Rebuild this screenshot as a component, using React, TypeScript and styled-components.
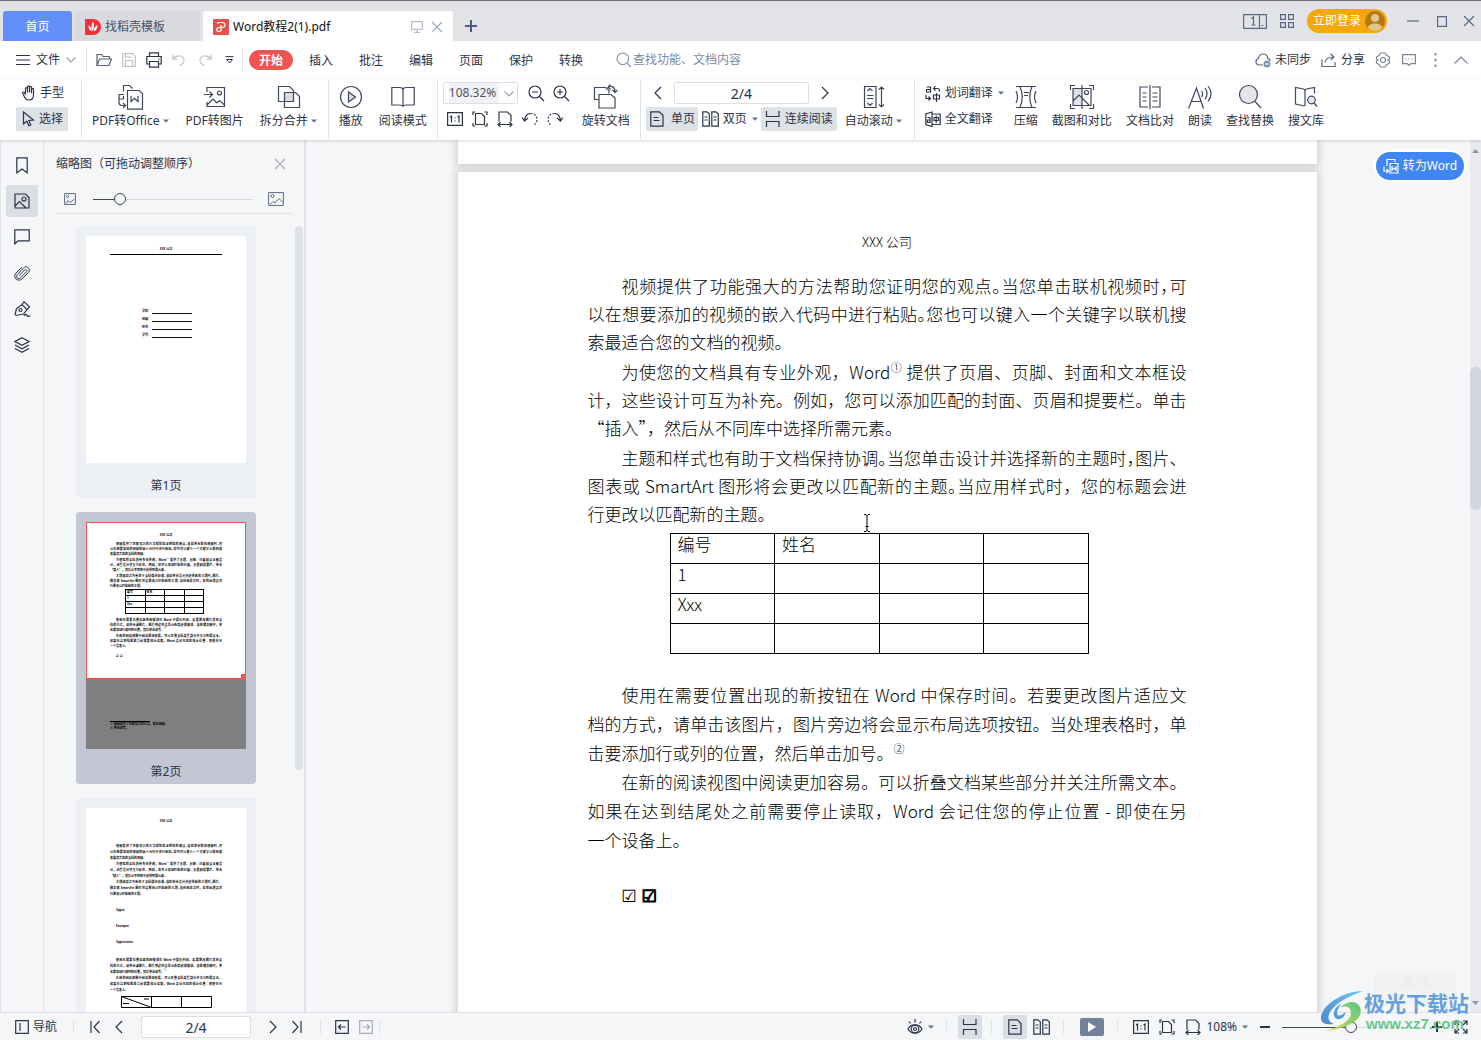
import React from 'react';
import styled, { createGlobalStyle, css } from 'styled-components';

const ink = '#2b3347';
const slate = '#5a6785';
const ui = `"Noto Sans", "Noto Sans CJK SC", sans-serif`;

const Global = createGlobalStyle`
  * { box-sizing: border-box; }
  html, body { margin: 0; height: 100%; }
  body { font: 12px/16px ${ui}; color: ${ink}; background: #f5f6f8; overflow: hidden; }
  button, input, select { font: inherit; color: inherit; margin: 0; }
  button { border: 0; background: none; padding: 0; cursor: pointer; }
`;

/* ---------- icons ---------- */

const Svg = styled.svg`
  display: block;
  flex: none;
  fill: none;
  stroke: currentColor;
  stroke-width: 1.2;
`;

const art: Record<string, [number, number, React.ReactNode]> = {
  menu: [14, 12, <path d="M0 1.500h14M0 6h14M0 10.500h14" />],
  chevron: [10, 6, <path d="M.5.5 5 5l4.500-4.500" />],
  caret: [8, 4, <path d="M1 .5h6L4 3.800z" fill="#66728c" stroke="none" />],
  folder: [16, 14, <path d="M1 12.500V1.500h4.500l1.500 2h6.500v2.500M1 12.500 3.500 6H15.500l-2.500 6.500z" />],
  save: [14, 14, <path d="M.6.6h10l2.800 2.800v10H.6zM3.500 13V7.500h7V13M3.500.6v3.500h6" />],
  printer: [16, 16, <path d="M3.500 4.500V.8h9v3.700M3.500 12H.8V4.500h14.400V12h-2.700M3.500 9.500h9v5.700h-9zM12 7h1.500" />],
  undo: [14, 12, <path d="M1 .8v4.400h4.400M1.200 5C4 1 12 .6 12 6c0 2.500-1.500 4.500-4.500 5.500" />],
  redo: [14, 12, <path d="M13 .8v4.400H8.600M12.800 5C10 1 2 .6 2 6c0 2.500 1.500 4.500 4.500 5.500" />],
  more: [9, 8, <path d="M.5.600h8M1.500 3.500h6l-3 3.500z" strokeWidth="1" />],
  search: [16, 16, <path d="M11.500 11.500 15 15M6.800 1a5.800 5.800 0 1 0 0 11.600A5.800 5.800 0 0 0 6.800 1z" />],
  cloud: [16, 15, <><path d="M8 12H4a3.300 3.300 0 0 1-.5-6.500C4 2.500 6 1 8.200 1c2.500 0 4.300 1.800 4.500 4.300 1.500.3 2.300 1.400 2.300 2.700" /><circle cx="12" cy="11" r="3.500" fill="#8594b4" stroke="none" /><path d="M10.300 11h3.400" stroke="#fff" /></>],
  share: [16, 14, <path d="M1 6.500v7h13v-4.500M4 9.500C4.500 6 7 4 12.500 4M9.500.8 13 4 9.500 7" />],
  gear: [16, 16, <><path d="M5.500 1h5l1.300 2.300L14.500 5v2L13 8l1.500 1v2l-2.700 1.700L10.500 15h-5l-1.300-2.300L1.500 11V9L3 8 1.500 7V5l2.700-1.700z" /><circle cx="8" cy="8" r="2.500" /></>],
  chat: [14, 12, <path d="M.6.6h12.800v9H9L7 11.500 5 9.600H.6zM3.500 5h1M6.500 5h1M9.500 5h1" />],
  dots: [3, 14, <path d="M1.500 0v2.500M1.500 5.700v2.600M1.500 11.500V14" strokeWidth="2" />],
  up: [14, 8, <path d="M.5 7.500 7 1l6.500 6.500" />],
  hand: [14, 16, <path d="M3.500 9.500V3.700c0-1.500 2-1.500 2 0V7.500 2c0-1.500 2-1.500 2 0v5.500V2.500c0-1.500 2-1.500 2 0V8 4.500c0-1.500 2-1.500 2 0V10c0 3.500-1.800 5-4.500 5-2.500 0-3.500-1-4.500-3L.8 8.500c-.5-1.200 1-2 1.700-1z" />],
  pointer: [13, 16, <path d="M1.500 1v12l3.300-2.700 2 4.500 2-.9-2-4.400 4.700-.5z" />],
  office: [26, 26, <path d="M9.500 25.200V6.500h11.800l3.200 3.200v15.500zM13 12v5.500l3.500-3 3.500 3V12M5.500 7.500V1.500h6l3 3M1 18.500v-8h5M1 15h4.500v-3M1 18.500c0 2 1 3 3 3h3M5 19l2.500 2.500L5 24" />],
  toimage: [22, 24, <path d="M3 7V2.500h17.500v19H3V17M3 20l6-6 4 4 2.500-2.500 5 4.500M0 9.500h8M5.500 6.500l3 3-3 3M15.500 6a2 2 0 1 0 0 4 2 2 0 0 0 0-4z" />],
  split: [24, 24, <><path d="M7.500 7.500h9v9h-9z" fill="#d9dce1" stroke="none" /><path d="M1.500 1.500h11l4 4v11h-15zM7.500 7.500h11l4 4v11h-15z" /></>],
  play: [24, 24, <><circle cx="12" cy="12" r="10.500" /><path d="M9.500 7v10l7-5z" fill="#d9dce1" /></>],
  book: [24, 22, <path d="M.8 1.500h8c2 0 3.200.8 3.200 2.500v16.500c-.5-1-1.500-1.500-3-1.500H.8zM23.200 1.500h-8C13.200 1.500 12 2.300 12 4v16.500c.5-1 1.500-1.500 3-1.500h8.200z" />],
  minus: [17, 17, <><circle cx="7" cy="7" r="6" /><path d="M11.500 11.500 16 16M4 7h6" /></>],
  plus: [17, 17, <><circle cx="7" cy="7" r="6" /><path d="M11.500 11.500 16 16M4 7h6M7 4v6" /></>],
  actual: [16, 14, <path d="M.6.6h14.800v12.800H.6zM3 5l1.500-1v6.500M8 5.500v1M8 8.500v1M10.500 5 12 4v6.500" />],
  fit: [16, 16, <path d="M3.500 2.500h6l3 3v8h-9zM1 4V1h2M12.500 1H15v3M1 12v3h2M15 12v3h-2.500" />],
  width: [16, 16, <path d="M2 10.500V1h8.500L14 4.500v6M1 13.500h14M3.500 11 1 13.500 3.500 16M12.500 11l2.500 2.500-2.500 2.500" />],
  ccw: [18, 14, <><path d="M1 5.500 3.500 9 7 6M3.500 9C3.500 4.500 6 1.500 9.500 1.500" /><path d="M9.500 1.500c4 0 6.500 2.500 6.500 6 0 2-1 4-2.500 5" strokeDasharray="2 1.500" /></>],
  cw: [18, 14, <><path d="M17 5.500 14.500 9 11 6M14.500 9c0-4.500-2.500-7.500-6-7.500" /><path d="M8.500 1.500C4.500 1.500 2 4 2 7.500c0 2 1 4 2.500 5" strokeDasharray="2 1.500" /></>],
  rotate: [26, 26, <><path d="M5.500 15.500h-4v-12h11l3.500 3v3" /><path d="M6 10.500h12l4 3.500v10H6zM15 3.500c3-2 7-1 7 4M17.500.5 14.800 3.500l3 2M19.500 6l2.500 2.500L24.500 6" /></>],
  left: [8, 14, <path d="M7 1 1 7l6 6" />],
  right: [8, 14, <path d="m1 1 6 6-6 6" />],
  page: [14, 16, <path d="M.8.8h8.500L13 4.500v10.700H.8zM3.500 6.500h5M3.500 9.500h6" />],
  pages: [17, 16, <path d="M.8.8h4l2.500 2v12.400H.8zM9.800.8h4l2.500 2v12.400H9.800zM2.500 6h3M2.500 9h3M11.500 6h3M11.500 9h3" />],
  flow: [16, 16, <path d="M1.500 0v5.500h12.500V0M1.500 16v-5.500h12.500V16" />],
  scroll: [22, 24, <path d="M1.500 1.500h11.500v21H1.500zM4.500 6l2.500-2.500L9.500 6M4 10.500h6.500M4 13.500h6.500M4.500 18 7 20.500 9.500 18M18.500 2v20M16 4.500l2.500-2.500L21 4.500M16 19.500l2.500 2.500 2.500-2.500" />],
  word: [16, 17, <path d="M1.500 2h4v5h-4V4.500h4M8.500 3.500h4.500c1 0 1.500.8 1.500 3M10.500 1 8.500 3.500l2 2.200M8.500 10h6v4h-6zM11.500 8v9M1 10v3.500h4M3.500 11.500l2 2-2 2" />],
  fulltext: [16, 16, <path d="M7 1 .8 3v10.500L7 15.500zM7 3h8.200v10.500H7M2.500 6.500H5v5H2.500V9H5M9 6.500h4.500v3H9zM11.200 4.500v7.500" />],
  compress: [24, 24, <path d="M2 1.500h20M2 22.500h20M6 1.500c3 7 3 14 0 21M18 1.500c-3 7-3 14 0 21M2 6c2 4 2 8 0 12M22 6c-2 4-2 8 0 12M10 7.500h5M10 10.500h4" />],
  capture: [26, 26, <><path d="M4 5h9v16H4z" fill="#e0e2e6" stroke="none" /><path d="M1.500 6V1.500H6M20 1.500h4.500V6M1.500 20v4.500H6M20 24.500h4.500V20M4 4.500h18v17H4zM13 1v24M4 17l6-6 10 10" /><circle cx="17.500" cy="8.500" r="2" /></>],
  compare: [24, 24, <path d="M10 2H2v20h8M14 2h8v20h-8M12 0v24M4.500 8h4M4.500 12h4M4.500 16h4M14.500 8h5M14.500 12h5M14.500 16h5" />],
  speak: [24, 26, <path d="M.6 24.500 8.500 4l7 20.500M3.500 17.500h9.500M13.500 7c1.500 2 1.500 4 0 6M17 4c2.500 3.500 2.500 8 0 11.500M20 2c4 5 4 10.500 0 15.500" />],
  find: [24, 25, <><circle cx="10.500" cy="10.500" r="9" fill="#e3e5e9" /><path d="m17 17.500 6 6.500" /></>],
  library: [24, 22, <><path d="M10.500 20 1.500 18V1.500l8 1.500 1.500 1 1.500-1 8-1.500v6M11 4v16" /><circle cx="17.500" cy="14" r="3.800" fill="#e3e5e9" /><path d="m20 17 3 3.500" /></>],
  bookmark: [12, 17, <path d="M.8.8h10.400v15L6 12 .8 15.800z" />],
  picture: [16, 16, <path d="M1 1h10.500L15 4.500V15H1zM1 13l4.500-4.500L12 15M10 4a2 2 0 1 0 0 4 2 2 0 0 0 0-4z" />],
  comment: [16, 16, <path d="M.8.8h14.400v11H4L.8 15z" />],
  clip: [16, 16, <path d="M5 10.800 10.500 5c1.400-1.400 3.200.4 1.900 1.900L6.500 12.800c-2.200 2.200-5.500-.8-3.200-3.200L9.500 3c3.300-3.400 8 1.200 4.800 4.700L8 14c-1.500 1.400-4.500 1.700-6.200-.2C.3 12 .6 9.500 2 8l6-6" strokeWidth="1" />],
  pen: [17, 16, <path d="M1 14 2.500 7.500 8 3.500l5 5-3.500 4.500L1.500 14.500M8 3.500 10 .8l5.500 5L13 8.500M6.500 7.500a1.500 1.500 0 1 0 0 3 1.500 1.500 0 0 0 0-3zM10 15c1-2 2.500-2 3-.5s1.500.5 3.500.5" />],
  layers: [16, 16, <path d="M8 .8 15 4.500 8 8.200 1 4.500zM1 8l7 3.700L15 8M1 11.500l7 3.700 7-3.700" />],
  imgS: [12, 12, <path d="M.6.600h10.800v10.800H.6zM2 10.500 4 7.500l2 2L10.500 6M3.500 2.500a1 1 0 1 0 0 2 1 1 0 0 0 0-2z" strokeWidth="1" />],
  imgL: [16, 14, <path d="M.6.600h14.800v12.800H.6zM2 12.500l3-3 2 1.500L11 6.500l4 4M4.500 2.500a1.500 1.500 0 1 0 0 3 1.500 1.500 0 0 0 0-3z" strokeWidth="1" />],
  close: [12, 12, <path d="m1 1 10 10M11 1 1 11" />],
  nav: [14, 14, <path d="M.7.700h12.600v12.600H.7zM5 3v8" />],
  first: [10, 14, <path d="M1 1v12M9.500 1 4 7l5.500 6" />],
  last: [10, 14, <path d="M9 1v12M.5 1 6 7l-5.500 6" />],
  back: [14, 14, <path d="M.7.700h12.600v12.600H.7zM3.500 7h7M6 4.500 3.500 7 6 9.500" />],
  forward: [14, 14, <path d="M.7.700h12.600v12.600H.7zM3.500 7h7M8 4.500 10.500 7 8 9.500" />],
  eye: [16, 16, <><path d="M1 10C4 4.500 12 4.500 15 10c-3 5.500-11 5.500-14 0zM8 3.500V0M3.500 4.500 2 2.500M12.500 4.500 14 2.500" /><circle cx="8" cy="10" r="3.800" /><circle cx="8" cy="10" r="1.500" /></>],
  full: [14, 14, <path d="M1 5V1h4M9 1h4v4M13 9v4H9M5 13H1V9M1 1l4 4M13 1 9 5M13 13 9 9M1 13l4-4" />],
  monitor: [12, 12, <path d="M.6.600h10.800v7.800H.6zM6 8.500V11M3 11.400h6" />],
  add: [12, 12, <path d="M6 0v12M0 6h12" strokeWidth="2" />],
  dash: [10, 10, <path d="M0 5h10" strokeWidth="2" />],
  cross: [10, 10, <path d="M0 5h10M5 0v10" strokeWidth="2" />],
  layout: [24, 16, <path d="M.6 1.600h22.800v13.800H.6zM16.500 1.600v13.800M8.500 5.500l2-1.500v8M8.500 12h4M18.500 12.500h2" />],
  grid: [14, 14, <path d="M.6.600h4.800v4.800H.6zM8.600.600h4.800v4.800H8.600zM.6 8.600h4.800v4.800H.6zM8.600 8.600h4.800v4.800H8.600z" />],
  min: [12, 12, <path d="M0 6h12" />],
  max: [10, 12, <path d="M.6 1.600h8.800v9.800H.6z" />],
};

const Icon = ({ n, color }: { n: string; color?: string }) => {
  const [w, h, body] = art[n];
  return (
    <Svg width={w} height={h} viewBox={`0 0 ${w} ${h}`} color={color} aria-hidden>
      {body}
    </Svg>
  );
};

/* ---------- shared pieces ---------- */

const Shell = styled.div`
  height: 100vh;
  display: flex;
  flex-direction: column;
  position: relative;
`;
const Spacer = styled.div<{ $grow?: number }>`flex: ${p => p.$grow ?? 1} 1 0;`;
const Gap = styled.span<{ $w: number }>`flex: none; width: ${p => p.$w}px;`;
const Rule = styled.i<{ $h?: number; $l?: number; $r?: number }>`
  flex: none;
  width: 1px;
  height: ${p => p.$h ?? 24}px;
  margin: 0 ${p => p.$r ?? 2}px 0 ${p => p.$l ?? 2}px;
  background: #e1e3ea;
`;
const IconBtn = styled.button<{ $w: number; $h?: number; $on?: boolean }>`
  flex: none;
  width: ${p => p.$w}px;
  height: ${p => p.$h ?? 24}px;
  display: flex;
  align-items: center;
  justify-content: center;
  border-radius: 2px;
  background: ${p => (p.$on ? '#dadfe6' : 'none')};
`;
const B = ({ n, w, h, on, color, label }: { n: string; w: number; h?: number; on?: boolean; color?: string; label: string }) => (
  <IconBtn $w={w} $h={h} $on={on} aria-label={label}><Icon n={n} color={color} /></IconBtn>
);

/* ---------- title bar ---------- */

const TitleBar = styled.header`
  flex: none;
  height: 41px;
  display: flex;
  align-items: flex-end;
  background: #e2e3e7;
  border-top: 1px solid #6b6b6d;
  padding-left: 3px;
  gap: 3px;
`;
const Tab = styled.button<{ $w: number; $kind: 'home' | 'idle' | 'open' }>`
  flex: none;
  width: ${p => p.$w}px;
  height: 30px;
  display: flex;
  align-items: center;
  gap: 4px;
  padding: 1px 6px 0 10px;
  border-radius: 3px 3px 0 0;
  ${p => p.$kind === 'home' && css`justify-content: center; padding: 1px 0 0; background: #638ffb; color: #fff;`}
  ${p => p.$kind === 'idle' && css`background: #d9dadd; color: #4a5162;`}
  ${p => p.$kind === 'open' && css`background: #fff; color: #111;`}
`;
const WindowBar = styled.div`
  height: 40px;
  display: flex;
  align-items: center;
  color: ${slate};
`;
const AddBar = styled(WindowBar)`padding-top: 10px;`;
const Login = styled.button`
  height: 24px;
  width: 80px;
  margin: 0 7px 0 6px;
  padding: 0 2px 0 6px;
  border-radius: 12px;
  background: #f5a70b;
  color: #fff;
  display: flex;
  align-items: center;
  justify-content: space-between;
`;

/* ---------- menu row ---------- */

const MenuRow = styled.nav`
  flex: none;
  height: 38px;
  display: flex;
  align-items: center;
  background: #fff;
  padding: 0 7px 0 16px;
`;
const FileBtn = styled.button`
  width: 70px;
  height: 24px;
  display: flex;
  align-items: center;
  gap: 6px;
`;
const MenuTab = styled.button<{ $on?: boolean }>`
  width: ${p => (p.$on ? 44 : 50)}px;
  height: 20px;
  padding-top: 2px;
  border-radius: 10px;
  margin-right: ${p => (p.$on ? 3 : 0)}px;
  ${p => p.$on && css`background: #ee5450; color: #fff; font-weight: 700;`}
`;
const Search = styled.label`
  display: flex;
  align-items: center;
  gap: 1px;
  margin-left: 20px;
  color: #8793ad;
  input {
    width: 160px;
    border: 0;
    outline: 0;
    padding: 0;
    background: none;
  }
  input::placeholder { color: #7a88a6; opacity: 1; }
`;
const TextBtn = styled.button<{ $gap?: number }>`
  display: flex;
  align-items: center;
  gap: 4px;
  margin-right: ${p => p.$gap ?? 0}px;
`;

/* ---------- ribbon ---------- */

const Ribbon = styled.section`
  flex: none;
  height: 61px;
  display: flex;
  background: #fff;
  padding: 2px 0 0 16px;
  box-shadow: 0 1px 3px rgba(0, 0, 0, 0.16);
  position: relative;
  z-index: 2;
`;
const Big = styled.button<{ $tight?: boolean }>`
  flex: none;
  height: 56px;
  padding: 0 ${p => (p.$tight ? 7 : 8)}px;
  display: grid;
  grid-template-rows: 31px 18px;
  justify-items: center;
  align-items: center;
  > span { display: flex; align-items: center; gap: 2px; white-space: nowrap; }
`;
const BigBtn = ({ n, text, drop, tight }: { n: string; text: string; drop?: boolean; tight?: boolean }) => (
  <Big $tight={tight}><Icon n={n} color="#3d465a" /><span>{text}{drop && <Icon n="caret" />}</span></Big>
);
const Stack = styled.div`
  flex: none;
  display: flex;
  flex-direction: column;
  gap: 2px;
`;
const Row = styled.div`
  display: flex;
  align-items: center;
  height: 24px;
`;
const Small = styled.button<{ $on?: boolean; $w: number; $pad?: number }>`
  flex: none;
  width: ${p => p.$w}px;
  height: 24px;
  padding-left: ${p => p.$pad ?? 4}px;
  display: flex;
  align-items: center;
  gap: 4px;
  white-space: nowrap;
  border-radius: 2px;
  background: ${p => (p.$on ? '#dde2e7' : 'none')};
`;
const Zoom = styled.label`
  position: relative;
  width: 75px;
  height: 22px;
  border: 1px solid #dcdee4;
  border-radius: 2px;
  select {
    appearance: none;
    display: block;
    width: 100%;
    height: 20px;
    padding: 0 0 0 5px;
    border: 0;
    outline: 0;
    color: #4d5568;
    background: linear-gradient(90deg, #fff 5px, #f1f2f5 5px, #f1f2f5 55px, #fff 55px);
  }
  svg { position: absolute; right: 3px; top: 8px; color: #98a0b2; pointer-events: none; }
`;
const PageInput = styled.input<{ $w: number }>`
  width: ${p => p.$w}px;
  height: 22px;
  border: 1px solid #dcdee4;
  border-radius: 2px;
  background: #fff;
  padding: 0;
  text-align: center;
  font-size: 14px;
  outline: 0;
`;

/* ---------- side rail and thumbnails ---------- */

const Body = styled.main`
  flex: 1;
  min-height: 0;
  display: flex;
  border-left: 1px solid #e3e4eb;
`;
const Rail = styled.aside`
  flex: none;
  width: 43px;
  padding: 9px 5px;
  border-right: 1px solid #e3e4eb;
  display: flex;
  flex-direction: column;
  gap: 4px;
`;
const Panel = styled.section`
  flex: none;
  width: 262px;
  border-right: 2px solid #e0e1ea;
  display: flex;
  flex-direction: column;
`;
const PanelHead = styled.div`
  flex: none;
  height: 74px;
  margin: 0 12px;
  border-bottom: 1px solid #e1e3e8;
`;
const PanelTitle = styled.div`
  display: flex;
  align-items: center;
  justify-content: space-between;
  height: 48px;
  padding-right: 6px;
`;
const SizeRow = styled.div`
  display: flex;
  align-items: center;
  height: 22px;
  padding: 0 8px;
  gap: 17px;
  color: ${slate};
  > :last-child { margin-left: -2px; }
`;
const Range = styled.input<{ $w: number; $fill: number }>`
  appearance: none;
  width: ${p => p.$w}px;
  height: 14px;
  margin: 0;
  background: linear-gradient(90deg, #3b4663 ${p => p.$fill}%, #d3d7de ${p => p.$fill}%) center / 100% 1px no-repeat;
  &::-webkit-slider-thumb {
    appearance: none;
    width: 12px;
    height: 12px;
    border: 1px solid #3b4663;
    border-radius: 6px;
    background: #f5f6f8;
  }
`;
const ThumbArea = styled.div`
  flex: 1;
  min-height: 0;
  display: flex;
  justify-content: flex-end;
  padding: 12px 1px 0 0;
`;
const ThumbList = styled.div`
  flex: none;
  width: 180px;
  margin-right: 39px;
  overflow: hidden;
  display: flex;
  flex-direction: column;
  gap: 14px;
`;
const ScrollCol = styled.div<{ $w: number; $bg?: string }>`
  flex: none;
  width: ${p => p.$w}px;
  display: flex;
  flex-direction: column;
  align-items: center;
  background: ${p => p.$bg ?? 'none'};
`;
const DocScroll = styled(ScrollCol)`padding: 9px 0 7px;`;
const ScrollThumb = styled.div<{ $grow: number; $bg: string }>`
  flex: ${p => p.$grow} 1 0;
  width: 100%;
  border-radius: 5px;
  background: ${p => p.$bg};
`;
const Card = styled.figure<{ $on?: boolean }>`
  flex: none;
  margin: 0;
  height: 272px;
  padding: 10px;
  border-radius: 4px;
  background: ${p => (p.$on ? '#c3c7d3' : '#ecf0f4')};
  figcaption { text-align: center; margin-top: 15px; }
`;
const Mini = styled.div<{ $lh?: number }>`
  position: relative;
  height: 227px;
  padding: 11px 24px 19px;
  background: #fff;
  color: #000;
  font: 700 3px/${p => p.$lh ?? 5}px "Noto Sans CJK SC", sans-serif;
  display: flex;
  flex-direction: column;
`;
const MiniHead = styled.div<{ $gap: number; $line?: boolean }>`
  text-align: center;
  line-height: 5px;
  margin-bottom: ${p => p.$gap}px;
  ${p => p.$line && css`border-bottom: 1px solid #000; padding-bottom: 2px;`}
`;
const MiniField = styled.div`
  display: grid;
  grid-template-columns: 8px 40px;
  gap: 2px;
  width: 50px;
  margin: 0 0 3px 32px;
  white-space: nowrap;
  &::after { content: ''; border-bottom: 1px solid #111; }
`;
const ViewFrame = styled.div`
  position: absolute;
  inset: 0 0 69px;
  border: 1px solid #ee5450;
  border-bottom-width: 2px;
  &::after {
    content: '';
    position: absolute;
    right: 0;
    bottom: 0;
    width: 4px;
    height: 4px;
    background: #ee5450;
  }
`;
const Shade = styled.div`
  position: absolute;
  inset: 158px 0 0;
  background: rgba(0, 0, 0, 0.5);
`;
const Notes = styled.div`
  margin-top: auto;
  line-height: 4px;
  &::before { content: ''; display: block; width: 40px; border-top: 1px solid #000; }
`;
const MiniWords = styled.div`
  line-height: 16px;
  padding: 5px 0 7px 6px;
`;

/* ---------- document ---------- */

const DocArea = styled.section`
  flex: 1;
  min-width: 0;
  position: relative;
  overflow: hidden;
  display: flex;
  flex-direction: column;
  align-items: center;
  gap: 8px;
  padding-right: 2px;
`;
const Page = styled.article<{ $tail?: boolean }>`
  flex: none;
  width: 859px;
  height: ${p => (p.$tail ? 24 : 1214)}px;
  padding: ${p => (p.$tail ? 0 : '60px 130px')};
  background: #fff;
  color: #000;
  box-shadow: 0 0 9px 2px rgba(0, 0, 0, 0.16);
  font: 300 17px/28px "Noto Sans CJK SC Light", "Noto Sans CJK SC", sans-serif;
`;
const PageHead = styled.div`
  text-align: center;
  font-size: 13px;
  line-height: 20px;
  margin-bottom: 20px;
`;
const Text = styled.div<{ $lh: number; $gap?: number }>`
  display: flex;
  flex-direction: column;
  gap: ${p => p.$gap ?? 0}px;
  line-height: ${p => p.$lh}px;
`;
const Para = styled.p`
  margin: 0;
  > span:first-child { padding-left: 2em; }
`;
const Line = styled.span<{ $end?: boolean }>`
  display: block;
  text-align: justify;
  text-align-last: ${p => (p.$end ? 'left' : 'justify')};
`;
const Half = styled.span`font-feature-settings: "halt";`;
const Note = styled.sup<{ $mini?: boolean }>`
  font-size: ${p => (p.$mini ? 2 : 11)}px;
  line-height: 0;
`;
const Grid = styled.table<{ $mini?: boolean }>`
  border-collapse: collapse;
  table-layout: fixed;
  ${p => (p.$mini
    ? css`width: 79px; margin: 0 0 4px 15px; td { height: 6px; line-height: 4px; }`
    : css`width: 419px; margin: 5px 0 26px 82px; td { height: 30px; line-height: 20px; }`)}
  td {
    border: 1px solid #000;
    padding: 0 0 0 ${p => (p.$mini ? 1 : 7)}px;
    vertical-align: top;
  }
`;
const MiniTable = styled.svg`margin: 3px 0 0 11px; flex: none; display: block;`;
const Ticks = styled.div<{ $mini?: boolean }>`
  ${p => (p.$mini
    ? css`padding: 5px 0 0 6px;`
    : css`display: flex; gap: 5px; padding: 29px 0 0 34px; font: 17px/26px "DejaVu Sans", sans-serif;`)}
  b { font-weight: 700; -webkit-text-stroke: 1px #000; }
`;
const Caret = styled.svg`
  position: absolute;
  left: calc(50% - 25px);
  top: 374px;
`;
const ToWord = styled.button`
  position: absolute;
  right: 6px;
  top: 12px;
  width: 88px;
  height: 28px;
  border-radius: 14px;
  background: #4086f2;
  box-shadow: 0 0 0 2px #fff;
  color: #fff;
  display: flex;
  align-items: center;
  justify-content: center;
  gap: 4px;
`;
const Toast = styled.div`
  position: absolute;
  right: 13px;
  bottom: 7px;
  width: 83px;
  height: 31px;
  border-radius: 4px;
  background: #f1f2f4;
  color: #e9ebee;
  text-align: center;
  line-height: 20px;
`;

const lines1 = [
  ['视频提供了功能强大的方法帮助您证明您的观点|。|当您单击联机视频时|，|可', '以在想要添加的视频的嵌入代码中进行粘贴|。|您也可以键入一个关键字以联机搜', '索最适合您的文档的视频。'],
  ['为使您的文档具有专业外观，Word① 提供了页眉、页脚、封面和文本框设', '计，这些设计可互为补充。例如，您可以添加匹配的封面、页眉和提要栏。单击', '“插入”，然后从不同库中选择所需元素。'],
  ['主题和样式也有助于文档保持协调|。|当您单击设计并选择新的主题时|，|图片、', '图表或 SmartArt 图形将会更改以匹配新的主题|。|当应用样式时，您的标题会进', '行更改以匹配新的主题。'],
];
const lines2 = [
  ['使用在需要位置出现的新按钮在 Word 中保存时间。若要更改图片适应文', '档的方式，请单击该图片，图片旁边将会显示布局选项按钮。当处理表格时，单', '击要添加行或列的位置，然后单击加号。②'],
  ['在新的阅读视图中阅读更加容易。可以折叠文档某些部分并关注所需文本。', '如果在达到结尾处之前需要停止读取，Word 会记住您的停止位置 - 即使在另', '一个设备上。'],
];

const rich = (s: string, mini?: boolean) =>
  s.split('|').map((part, i) =>
    i % 2 ? <Half key={i}>{part}</Half> : (
      <React.Fragment key={i}>
        {part.split(/([①②])/).map((t, j) => (j % 2 ? <Note key={j} $mini={mini}>{t}</Note> : t))}
      </React.Fragment>
    ),
  );

const Paras = ({ data, lh, gap, mini }: { data: string[][]; lh: number; gap?: number; mini?: boolean }) => (
  <Text $lh={lh} $gap={gap}>
    {data.map((p, i) => (
      <Para key={i}>
        {p.map((l, j) => <Line key={j} $end={j === p.length - 1}>{rich(l, mini)}</Line>)}
      </Para>
    ))}
  </Text>
);

const cells = [['编号', '姓名', '', ''], ['1', '', '', ''], ['Xxx', '', '', ''], ['', '', '', '']];
const DataTable = ({ mini }: { mini?: boolean }) => (
  <Grid $mini={mini}>
    <tbody>{cells.map((r, i) => <tr key={i}>{r.map((c, j) => <td key={j}>{c}</td>)}</tr>)}</tbody>
  </Grid>
);

/* ---------- status bar and site mark ---------- */

const Status = styled.footer`
  flex: none;
  height: 28px;
  display: flex;
  align-items: center;
  border-top: 1px solid #dfe1e8;
  padding: 1px 8px 0 15px;
`;
const PlayBtn = styled.button`
  width: 24px;
  height: 18px;
  margin: 0 13px;
  border-radius: 2px;
  background: #73809c;
  display: grid;
  place-items: center;
`;
const Mark = styled.div`
  position: absolute;
  right: 10px;
  bottom: 6px;
  z-index: 3;
  display: flex;
  align-items: flex-end;
  pointer-events: none;
  opacity: 0.9;
  div { width: 107px; }
  strong { display: block; font: 700 21px/24px "Noto Sans CJK SC", sans-serif; color: #5598da; white-space: nowrap; }
  em { display: block; font: 700 15px/20px "Liberation Sans", sans-serif; color: #5cc481; margin-left: 2px; }
`;

const rail: [string, string][] = [['bookmark', '书签'], ['picture', '缩略图'], ['comment', '批注'], ['clip', '附件'], ['pen', '签名'], ['layers', '图层']];

export default function App() {
  return (
    <Shell>
      <Global />
      <TitleBar>
        <Tab $w={69} $kind="home">首页</Tab>
        <Tab $w={125} $kind="idle">
          <Svg width="16" height="16" viewBox="0 0 16 16">
            <g stroke="none">
              <path d="M0 0h8a8 8 0 0 1 0 16H0z" fill="#f5303a" />
              <path d="M8 2.500c1.500 3 1.200 6-.2 9.500C6 9.500 6 5.500 8 2.500zM3.500 6.500c2 .5 3 2.500 3.300 5.500C4.500 11.500 3.500 9.500 3.500 6.500zM12.500 6c0 3-1 5.500-3.800 6.500.2-3 1.300-5.500 3.800-6.500z" fill="#fff" />
            </g>
          </Svg>
          找稻壳模板
        </Tab>
        <Tab $w={250} $kind="open">
          <Svg width="16" height="16" viewBox="0 0 16 16">
            <rect width="16" height="16" rx="1" fill="#e5504d" stroke="none" />
            <path d="M5 5V3.500h4c4 0 4 5 0 5H6c-3 0-3 4 0 4 1.500 0 2-1 2-2V6" stroke="#fff" />
          </Svg>
          Word教程2(1).pdf
          <Spacer />
          <Icon n="monitor" color="#b3bbcc" />
          <IconBtn as="span" $w={20}><Icon n="close" color="#a0a9bd" /></IconBtn>
        </Tab>
        <AddBar><B n="add" w={30} label="新建" color="#4d5b7c" /></AddBar>
        <Spacer />
        <WindowBar>
          <B n="layout" w={34} label="布局" />
          <B n="grid" w={29} label="应用" />
          <Login>
            立即登录
            <Svg width="20" height="20" viewBox="0 0 20 20">
              <g stroke="none">
                <circle cx="10" cy="10" r="10" fill="#b27a08" />
                <circle cx="10" cy="7" r="4" fill="#e2c58e" />
                <path d="M3 17c0-6 14-6 14 0-4 4-10 4-14 0z" fill="#e2c58e" />
              </g>
            </Svg>
          </Login>
          <Rule $h={22} />
          <B n="min" w={28} label="最小化" />
          <B n="max" w={30} label="最大化" />
          <B n="close" w={24} label="关闭" />
        </WindowBar>
      </TitleBar>

      <MenuRow>
        <FileBtn><Icon n="menu" />文件<Icon n="chevron" color="#98a0b2" /></FileBtn>
        <Rule $l={0} $r={5} />
        <B n="folder" w={24} label="打开" color="#5b6273" />
        <B n="save" w={25} label="保存" color="#bfc2ca" />
        <B n="printer" w={25} label="打印" />
        <B n="undo" w={26} label="撤销" color="#c3c6cd" />
        <B n="redo" w={25} label="重做" color="#c3c6cd" />
        <B n="more" w={25} label="更多" />
        <Rule $l={0} $r={6} />
        <MenuTab $on>开始</MenuTab>
        {['插入', '批注', '编辑', '页面', '保护', '转换'].map(t => <MenuTab key={t}>{t}</MenuTab>)}
        <Search>
          <Icon n="search" />
          <input placeholder="查找功能、文档内容" aria-label="查找" />
        </Search>
        <Spacer />
        <TextBtn $gap={10}><Icon n="cloud" color={slate} />未同步</TextBtn>
        <TextBtn $gap={5}><Icon n="share" color={slate} />分享</TextBtn>
        <B n="gear" w={26} label="设置" color="#7d8496" />
        <B n="chat" w={26} label="反馈" color="#7d8496" />
        <B n="dots" w={26} label="更多" color="#7d8496" />
        <B n="up" w={26} label="收起" color="#7d8496" />
      </MenuRow>

      <Ribbon>
        <Stack>
          <Small $w={52} $pad={6}><Icon n="hand" />手型</Small>
          <Small $w={52} $pad={6} $on><Icon n="pointer" />选择</Small>
        </Stack>
        <Rule $h={58} $l={13} />
        <BigBtn n="office" text="PDF转Office" drop />
        <BigBtn n="toimage" text="PDF转图片" />
        <BigBtn n="split" text="拆分合并" drop />
        <Rule $h={58} />
        <BigBtn n="play" text="播放" />
        <BigBtn n="book" text="阅读模式" />
        <Rule $h={58} $r={5} />
        <Stack>
          <Row>
            <Zoom>
              <select aria-label="缩放" defaultValue="108.32%"><option>108.32%</option></select>
              <Icon n="chevron" />
            </Zoom>
            <Gap $w={6} />
            <B n="minus" w={25} label="缩小" />
            <B n="plus" w={25} label="放大" />
          </Row>
          <Row>
            <B n="actual" w={24} label="实际大小" />
            <B n="fit" w={26} label="适合页面" />
            <B n="width" w={25} label="适合宽度" />
            <B n="ccw" w={25} label="逆时针旋转" />
            <B n="cw" w={25} label="顺时针旋转" />
          </Row>
        </Stack>
        <BigBtn n="rotate" text="旋转文档" />
        <Rule $h={58} $r={5} />
        <Stack>
          <Row>
            <B n="left" w={24} label="上一页" />
            <Gap $w={4} />
            <PageInput $w={135} defaultValue="2/4" aria-label="页码" />
            <Gap $w={4} />
            <B n="right" w={24} label="下一页" />
          </Row>
          <Row>
            <Small $w={52} $on><Icon n="page" />&nbsp;单页</Small>
            <Small $w={63}><Icon n="pages" />双页<Icon n="caret" /></Small>
            <Small $w={76} $on><Icon n="flow" />连续阅读</Small>
          </Row>
        </Stack>
        <BigBtn n="scroll" text="自动滚动" drop />
        <Rule $h={58} $l={3} $r={6} />
        <Stack>
          <Small $w={86}><Icon n="word" />划词翻译<Icon n="caret" /></Small>
          <Small $w={86}><Icon n="fulltext" />全文翻译</Small>
        </Stack>
        <BigBtn n="compress" text="压缩" tight />
        <BigBtn n="capture" text="截图和对比" tight />
        <BigBtn n="compare" text="文档比对" tight />
        <BigBtn n="speak" text="朗读" tight />
        <BigBtn n="find" text="查找替换" tight />
        <BigBtn n="library" text="搜文库" tight />
      </Ribbon>

      <Body>
        <Rail>
          {rail.map(([n, label], i) => <B key={n} n={n} label={label} w={32} h={32} on={i === 1} />)}
        </Rail>
        <Panel>
          <PanelHead>
            <PanelTitle>缩略图（可拖动调整顺序）<B n="close" w={12} label="关闭" color="#a9adb8" /></PanelTitle>
            <SizeRow>
              <Icon n="imgS" />
              <Range type="range" $w={160} $fill={17} defaultValue={14} aria-label="缩略图大小" />
              <Icon n="imgL" />
            </SizeRow>
          </PanelHead>
          <ThumbArea>
            <ThumbList>
              <Card>
                <Mini>
                  <MiniHead $gap={54} $line>XXX 公司</MiniHead>
                  {['学院：', '班级：', '姓名：', '学号：'].map(t => <MiniField key={t}>{t}</MiniField>)}
                </Mini>
                <figcaption>第1页</figcaption>
              </Card>
              <Card $on>
                <Mini>
                  <MiniHead $gap={4}>XXX 公司</MiniHead>
                  <Paras data={lines1} lh={5} gap={1} mini />
                  <DataTable mini />
                  <Paras data={lines2} lh={5} gap={1} mini />
                  <Ticks $mini>☑ ☑</Ticks>
                  <Notes>① 视频提供了功能强大的方法，联机视频。<br />② 单击加号。</Notes>
                  <Shade />
                  <ViewFrame />
                </Mini>
                <figcaption>第2页</figcaption>
              </Card>
              <Card>
                <Mini $lh={6}>
                  <MiniHead $gap={19}>XXX 公司</MiniHead>
                  <Paras data={lines1} lh={6} mini />
                  <MiniWords>Apple<br />Example<br />Application</MiniWords>
                  <Paras data={lines2} lh={6} mini />
                  <MiniTable width="91" height="12" viewBox="0 0 91 12" fill="none" stroke="#000">
                    <path d="M.5.5h90v11H.5zM30.500.5v11M60.500.5v11M.5.5l30 11M23 3h5M2 7.500h6" />
                  </MiniTable>
                </Mini>
              </Card>
            </ThumbList>
            <ScrollCol $w={8}>
              <ScrollThumb $grow={544} $bg="#dfe2e5" />
              <Spacer $grow={242} />
            </ScrollCol>
          </ThumbArea>
        </Panel>

        <DocArea>
          <Page $tail />
          <Page>
            <PageHead>XXX 公司</PageHead>
            <Paras data={lines1} lh={28} gap={2} />
            <DataTable />
            <Paras data={lines2} lh={29} />
            <Ticks><span>☑</span><b>☑</b></Ticks>
          </Page>
          <Caret width="8" height="18" viewBox="0 0 8 18" fill="none" stroke="#000">
            <path d="M1 .5h2l1 1 1-1h2M4 1v16M1 17.500h2l1-1 1 1h2M2.500 12.500h3" />
          </Caret>
          <ToWord>
            <Svg width="16" height="16" viewBox="0 0 16 16">
              <path d="M7 5.500h8v9.500H7zM9 8v4l2-2 2 2V8M4 8V1.500h8V4M1 8.500V13h4.500M3.500 11l2 2-2 2" />
            </Svg>
            转为Word
          </ToWord>
          <Toast>第2页</Toast>
        </DocArea>
        <DocScroll $w={11} $bg="#e8eaef">
          <svg width="7" height="4" viewBox="0 0 7 4"><path d="M0 4h7L3.500 0z" fill="#8a94ab" /></svg>
          <Spacer $grow={214} />
          <ScrollThumb $grow={143} $bg="#d3d6df" />
          <Spacer $grow={491} />
          <svg width="7" height="4" viewBox="0 0 7 4"><path d="M0 0h7L3.500 4z" fill="#8a94ab" /></svg>
        </DocScroll>
      </Body>

      <Status>
        <TextBtn $gap={16}><Icon n="nav" />导航</TextBtn>
        <Rule $h={14} $l={0} $r={9} />
        <B n="first" w={24} label="第一页" />
        <B n="left" w={24} label="上一页" />
        <Gap $w={10} />
        <PageInput $w={110} defaultValue="2/4" aria-label="当前页" />
        <Gap $w={10} />
        <B n="right" w={24} label="下一页" />
        <B n="last" w={24} label="最后一页" />
        <Rule $h={14} $l={11} $r={9} />
        <B n="back" w={24} label="后退" />
        <B n="forward" w={24} label="前进" color="#a9adb6" />
        <Rule $h={14} $l={1} />
        <Spacer />
        <TextBtn><Icon n="eye" /><Icon n="caret" /></TextBtn>
        <Rule $h={14} $l={11} $r={11} />
        <B n="flow" w={24} label="连续" on />
        <Rule $h={14} $l={9} $r={11} />
        <B n="page" w={24} label="单页" on />
        <B n="pages" w={28} label="双页" />
        <Rule $h={14} $l={8} $r={3} />
        <PlayBtn aria-label="播放">
          <svg width="8" height="10" viewBox="0 0 8 10"><path d="M0 0v10l8-5z" fill="#fff" /></svg>
        </PlayBtn>
        <Rule $h={14} $l={0} $r={10} />
        <B n="actual" w={26} label="实际大小" />
        <B n="fit" w={26} label="适合页面" />
        <B n="width" w={26} label="适合宽度" />
        <TextBtn $gap={11}>108%<Icon n="caret" /></TextBtn>
        <Icon n="dash" />
        <Gap $w={12} />
        <Range type="range" $w={143} $fill={48} defaultValue={48} aria-label="缩放比例" />
        <B n="cross" w={24} label="放大" />
        <B n="full" w={24} label="全屏" />
      </Status>

      <Mark>
        <svg width="44" height="44" viewBox="0 0 44 44">
          <defs>
            <linearGradient id="sky" x1="1" y1="0" x2="0" y2="1"><stop offset="0" stopColor="#5cc3ef" /><stop offset="1" stopColor="#3d78c8" /></linearGradient>
            <linearGradient id="leaf" x1="1" y1="0" x2="0" y2="1"><stop offset="0" stopColor="#4dbf74" /><stop offset="1" stopColor="#d3e04a" /></linearGradient>
          </defs>
          <path d="M43 1C24 1 3 14 1 27c-1 7 7 8 13 7-8-3-7-10 0-17C22 9 33 5 43 1z" fill="url(#sky)" />
          <path d="M19 19c7-8 17-10 21-2 4 10-8 22-36 24 16-4 28-11 27-19-1-6-7-7-12-3z" fill="url(#leaf)" />
          <path d="M21 14c-7 3-10 12-4 15 5 1 9-4 8-7-3 4-8 5-8 1 0-3 2-6 4-9z" fill="#4a8fd6" />
        </svg>
        <div><strong>极光下载站</strong><em>www.xz7.com</em></div>
      </Mark>
    </Shell>
  );
}
